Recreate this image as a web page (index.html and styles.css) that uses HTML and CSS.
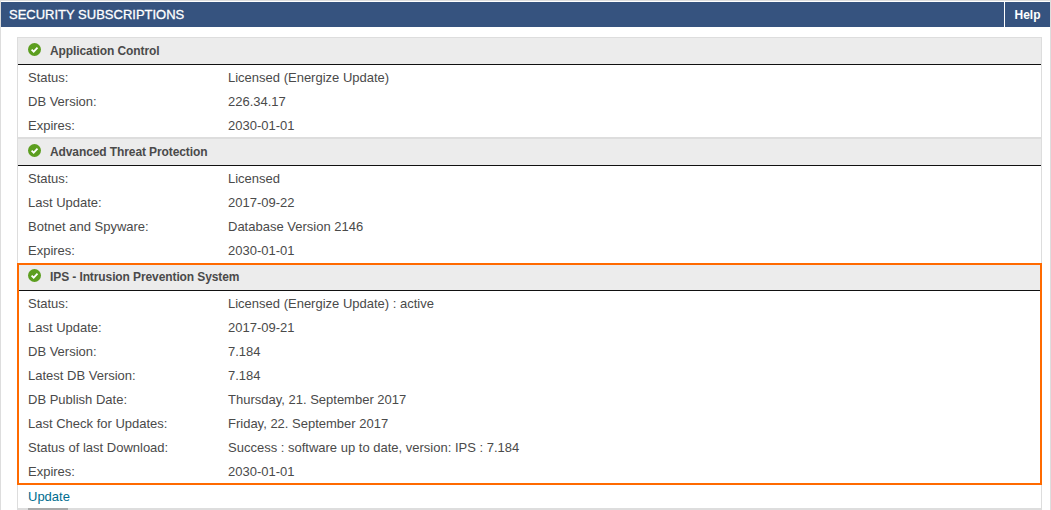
FILE: index.html
```html
<!DOCTYPE html>
<html lang="en">
<head>
  <meta charset="UTF-8">
  <meta name="viewport" content="width=device-width, initial-scale=1.0">
  <title>Security Subscriptions</title>
  <link rel="stylesheet" href="styles.css">
</head>
<body>
  <div class="page">
    <!-- Title Bar -->
    <header class="title-bar">
      <h1>SECURITY SUBSCRIPTIONS</h1>
      <a href="#" class="help-link">Help</a>
    </header>

    <main class="panel">
      <!-- Application Control -->
      <section class="sub">
        <h2 class="sub-head">
          <svg class="ok-icon" viewBox="0 0 13 13"><circle cx="6.5" cy="6.5" r="6.5"/><path d="M3.6 6.6 5.7 8.7 9.5 4.7"/></svg>
          Application Control
        </h2>
        <div class="row"><span class="row-label">Status:</span><span>Licensed (Energize Update)</span></div>
        <div class="row"><span class="row-label">DB Version:</span><span>226.34.17</span></div>
        <div class="row"><span class="row-label">Expires:</span><span>2030-01-01</span></div>
      </section>

      <!-- Advanced Threat Protection -->
      <section class="sub">
        <h2 class="sub-head">
          <svg class="ok-icon" viewBox="0 0 13 13"><circle cx="6.5" cy="6.5" r="6.5"/><path d="M3.6 6.6 5.7 8.7 9.5 4.7"/></svg>
          Advanced Threat Protection
        </h2>
        <div class="row"><span class="row-label">Status:</span><span>Licensed</span></div>
        <div class="row"><span class="row-label">Last Update:</span><span>2017-09-22</span></div>
        <div class="row"><span class="row-label">Botnet and Spyware:</span><span>Database Version 2146</span></div>
        <div class="row"><span class="row-label">Expires:</span><span>2030-01-01</span></div>
      </section>

      <!-- IPS, highlighted -->
      <section class="sub sub-marked">
        <h2 class="sub-head">
          <svg class="ok-icon" viewBox="0 0 13 13"><circle cx="6.5" cy="6.5" r="6.5"/><path d="M3.6 6.6 5.7 8.7 9.5 4.7"/></svg>
          IPS - Intrusion Prevention System
        </h2>
        <div class="row"><span class="row-label">Status:</span><span>Licensed (Energize Update) : active</span></div>
        <div class="row"><span class="row-label">Last Update:</span><span>2017-09-21</span></div>
        <div class="row"><span class="row-label">DB Version:</span><span>7.184</span></div>
        <div class="row"><span class="row-label">Latest DB Version:</span><span>7.184</span></div>
        <div class="row"><span class="row-label">DB Publish Date:</span><span>Thursday, 21. September 2017</span></div>
        <div class="row"><span class="row-label">Last Check for Updates:</span><span>Friday, 22. September 2017</span></div>
        <div class="row"><span class="row-label">Status of last Download:</span><span>Success : software up to date, version: IPS : 7.184</span></div>
        <div class="row"><span class="row-label">Expires:</span><span>2030-01-01</span></div>
      </section>

      <a href="#" class="update-link">Update</a>
      <div class="button-stub"></div>
    </main>
  </div>
</body>
</html>
```

FILE: styles.css
```css
:root {
  --title-bg: #36537f;
  --line: #dddddd;
  --head-bg: #ececec;
  --text: #4a4a4a;
  --marked: #ff6a00;
}

body {
  margin: 0;
  background: #fff;
  color: var(--text);
  font-family: "Liberation Sans", Arial, sans-serif;
  font-size: 13px;
  overflow: hidden;
}

.page {
  height: 510px;
  padding-top: 1px;
  border-left: 1px solid var(--line);
  border-right: 1px solid var(--line);
  border-top: 1px solid var(--line);
  box-sizing: border-box;
}

/* Title Bar */
.title-bar {
  display: flex;
  justify-content: space-between;
  height: 25px;
  background: var(--title-bg);
  color: #fff;
}

.title-bar h1 {
  margin: 0;
  padding-left: 8px;
  font-size: 13px;
  font-weight: normal;
  line-height: 25px;
  -webkit-text-stroke: 0.3px #fff;
}

.help-link {
  width: 45px;
  border-left: 1px solid #fff;
  color: #fff;
  font-size: 12px;
  font-weight: bold;
  line-height: 26px;
  text-align: center;
  text-decoration: none;
}

/* Panel */
.panel {
  height: 473px;
  margin: 10px 8px 0 16px;
  border: 1px solid var(--line);
  border-bottom-width: 2px;
  box-sizing: border-box;
}

.sub-head {
  display: flex;
  align-items: center;
  gap: 9px;
  height: 26px;
  margin: 0;
  padding-left: 10px;
  background: var(--head-bg);
  border-bottom: 1px solid #111;
  font-size: 12px;
  letter-spacing: -0.1px;
  color: #4a4a4a;
}

.sub + .sub .sub-head {
  border-top: 2px solid var(--line);
}

.ok-icon {
  width: 13px;
  height: 13px;
  margin-top: -3px;
}

.ok-icon circle {
  fill: #5c9e1f;
}

.ok-icon path {
  fill: none;
  stroke: #fff;
  stroke-width: 1.8;
}

.row {
  display: flex;
  height: 24px;
  box-sizing: border-box;
  padding: 1px 0 0 10px;
  line-height: 24px;
}

.row-label {
  width: 200px;
}

.sub-marked {
  margin: 1px -1px 0;
  border: 2px solid var(--marked);
}

.sub + .sub-marked .sub-head {
  height: 24px;
  border-top: 0;
  padding: 0 0 1px 9px;
}

.sub-marked .row {
  padding-left: 9px;
}

.update-link {
  display: block;
  padding-left: 10px;
  line-height: 23px;
  color: #006d8f;
  text-decoration: none;
}

.button-stub {
  width: 40px;
  height: 2px;
  margin-left: 10px;
  background: #aaa;
}
```
